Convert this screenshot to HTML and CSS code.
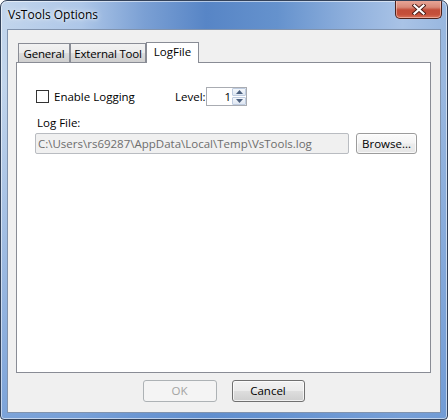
FILE: index.html
```html
<!DOCTYPE html>
<html>
<head>
<meta charset="utf-8">
<link rel="stylesheet" href="styles.css">
</head>
<body>
<div class="window">
  <div class="titlebar">
    <span class="title">VsTools Options</span>
    <div class="close">
      <svg width="14" height="11" viewBox="0 0 14 11">
        <path d="M2.5 1.5 L11.5 9.5 M11.5 1.5 L2.5 9.5" stroke="#4a1d17" stroke-width="4" stroke-linecap="square" fill="none"/>
        <path d="M2.5 1.5 L11.5 9.5 M11.5 1.5 L2.5 9.5" stroke="#ffffff" stroke-width="2.2" stroke-linecap="square" fill="none"/>
      </svg>
    </div>
  </div>
  <div class="client">
    <div class="tabs">
      <div class="tab">General</div>
      <div class="tab tab-ext">External Tool</div>
      <div class="tab active">LogFile</div>
    </div>
    <div class="panel">
      <div class="row1">
        <label class="check"><span class="box"></span><span>Enable Logging</span></label>
        <span class="level">Level:</span>
        <div class="spin">
          <span class="val">1</span>
          <div class="spinbtns">
            <div class="sb"><svg width="7" height="4" viewBox="0 0 7 4"><path d="M0 4 L3.5 0 L7 4 Z" fill="#4c607f"/></svg></div>
            <div class="sb"><svg width="7" height="4" viewBox="0 0 7 4"><path d="M0 0 L3.5 4 L7 0 Z" fill="#4c607f"/></svg></div>
          </div>
        </div>
      </div>
      <div class="loglabel">Log File:</div>
      <div class="row3">
        <div class="textbox">C:\Users\rs69287\AppData\Local\Temp\VsTools.log</div>
        <div class="btn browse">Browse...</div>
      </div>
    </div>
    <div class="buttons">
      <div class="btn ok disabled">OK</div>
      <div class="btn cancel">Cancel</div>
    </div>
  </div>
</div>
</body>
</html>
```

FILE: styles.css
```css
html, body {
  margin: 0;
  padding: 0;
  background: #ffffff;
}

body {
  font-family: "Open Sans", "Noto Sans", sans-serif;
  font-size: 11.5px;
  color: #000000;
}

.window {
  width: 448px;
  height: 420px;
  box-sizing: border-box;
  border: 1px solid #33425a;
  border-radius: 7px 7px 4px 4px;
  padding: 0 6px 6px;
  display: flex;
  flex-direction: column;
  background:
    linear-gradient(180deg, rgba(90, 136, 200, 0) 0%, rgba(90, 136, 200, 0) 20%, rgba(100, 146, 210, 0.75) 100%),
    linear-gradient(90deg, #c2d5ec 0%, #aec7e8 18%, #7ba0d4 32%, #5785c6 46%, #6592cd 62%, #8fb0dd 78%, #a9c3e6 90%, #98b7df 100%);
  box-shadow: inset 0 0 0 1px rgba(255, 255, 255, 0.55);
  overflow: hidden;
}

.titlebar {
  height: 28px;
  display: flex;
  align-items: flex-start;
  flex: none;
}

.title {
  padding-left: 1px;
  margin-top: 6px;
  font-size: 12px;
  line-height: 16px;
  color: #000000;
  text-shadow: 0 0 6px rgba(255, 255, 255, 0.9), 0 0 3px rgba(255, 255, 255, 0.8);
}

.close {
  margin-left: auto;
  margin-right: -1px;
  margin-top: -1px;
  width: 47px;
  height: 19px;
  box-sizing: border-box;
  border: 1px solid #4e231c;
  border-top: none;
  border-radius: 0 0 5px 5px;
  background: linear-gradient(180deg, #e9a99b 0%, #d88978 40%, #c24d39 55%, #c5503a 80%, #d9745c 100%);
  box-shadow: inset 0 0 0 1px rgba(255, 220, 210, 0.5);
  display: flex;
  align-items: center;
  justify-content: center;
}

.client {
  flex: 1;
  background: #f0f0f0;
  border: 1px solid #8193ad;
  display: flex;
  flex-direction: column;
  padding-top: 12px;
  padding-bottom: 10px;
}

.tabs {
  height: 20px;
  display: flex;
  align-items: flex-end;
  margin-left: 10px;
  position: relative;
  z-index: 2;
}

.tab {
  height: 19px;
  box-sizing: border-box;
  border: 1px solid #898c95;
  border-bottom: none;
  background: linear-gradient(180deg, #f2f2f2 0%, #ebebeb 50%, #dddddd 51%, #cfcfcf 100%);
  padding: 0;
  line-height: 19px;
  width: 52px;
  text-align: center;
  white-space: nowrap;
  letter-spacing: -0.2px;
}

.tab-ext {
  width: 76px;
}

.tab.active {
  height: 21px;
  width: 53px;
  background: #ffffff;
  margin-bottom: -1px;
  line-height: 18px;
  letter-spacing: 0;
}

.panel {
  height: 311px;
  box-sizing: border-box;
  margin: 0 9px 0 8px;
  border: 1px solid #898c95;
  background: #ffffff;
  padding: 24px 0 0 18px;
  position: relative;
  z-index: 1;
}

.row1 {
  display: flex;
  align-items: center;
  height: 19px;
}

.check {
  display: flex;
  align-items: center;
  width: 139px;
  margin-left: 1px;
  box-sizing: border-box;
}

.box {
  width: 13px;
  height: 13px;
  box-sizing: border-box;
  border: 1px solid #333333;
  background: #ffffff;
  margin-right: 5px;
  margin-top: -1px;
}

.level {
  width: 31px;
}

.spin {
  width: 41px;
  height: 19px;
  box-sizing: border-box;
  border: 1px solid #a9acb2;
  background: #ffffff;
  display: flex;
  align-items: center;
}

.val {
  flex: 1;
  text-align: right;
  padding-right: 1px;
  line-height: 17px;
}

.spinbtns {
  width: 14px;
  height: 17px;
  display: flex;
  flex-direction: column;
  gap: 1px;
}

.sb {
  flex: 1;
  box-sizing: border-box;
  border: 1px solid #bfcce0;
  border-radius: 1px;
  background: linear-gradient(180deg, #f4f7fb, #dfe7f2);
  display: flex;
  align-items: center;
  justify-content: center;
}

.loglabel {
  margin-top: 9px;
  line-height: 16px;
  padding-left: 2px;
}

.row3 {
  margin-top: 2px;
  display: flex;
  gap: 7px;
}

.textbox {
  width: 314px;
  height: 21px;
  box-sizing: border-box;
  border: 1px solid #b9bcc1;
  border-radius: 2px;
  background: #f0f0f0;
  color: #6d6d6d;
  padding-left: 2px;
  line-height: 19px;
  white-space: nowrap;
  overflow: hidden;
}

.btn {
  height: 21px;
  box-sizing: border-box;
  border: 1px solid #707070;
  border-radius: 3px;
  background: linear-gradient(180deg, #f2f2f2 0%, #ebebeb 48%, #dddddd 52%, #cfcfcf 100%);
  box-shadow: inset 0 0 0 1px rgba(255, 255, 255, 0.7);
  text-align: center;
  line-height: 19px;
}

.browse {
  width: 61px;
  border-color: #9c9c9c;
  background: linear-gradient(180deg, #fbfbfb 0%, #f4f4f4 48%, #ececec 52%, #e6e6e6 100%);
}

.buttons {
  margin-top: 7px;
  height: 22px;
  display: flex;
  justify-content: center;
  gap: 15px;
  padding-right: 1px;
}

.buttons .btn {
  height: 22px;
  line-height: 20px;
}

.ok {
  width: 74px;
}

.cancel {
  width: 73px;
}

.btn.disabled {
  border-color: #adb2b5;
  background: #f4f4f4;
  color: #a3a3a3;
  box-shadow: none;
}
```
